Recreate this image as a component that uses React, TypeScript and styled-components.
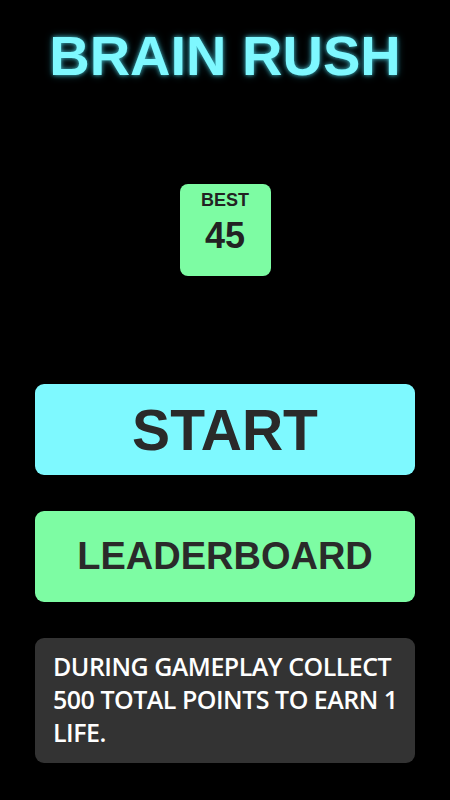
import React from "react";
import styled, { createGlobalStyle } from "styled-components";

const GlobalStyle = createGlobalStyle`
  html, body {
    margin: 0;
    padding: 0;
    background: #000;
  }
  body {
    font-family: "Liberation Sans", Arial, sans-serif;
  }
`;

const Screen = styled.div`
  width: 450px;
  height: 800px;
  background: #000;
  display: flex;
  flex-direction: column;
  align-items: center;
  box-sizing: border-box;
  padding: 0 35px;
  overflow: hidden;
`;

const Title = styled.h1`
  margin: 26px 0 0;
  font-size: 56px;
  line-height: 60px;
  font-weight: 700;
  color: #7ef8ff;
  text-shadow: 0 0 4px rgba(90, 240, 255, 0.7), 0 0 9px rgba(60, 220, 255, 0.35);
  white-space: nowrap;
`;

const BestCard = styled.div`
  margin-top: 98px;
  width: 91px;
  height: 92px;
  border-radius: 8px;
  background: #7dfca3;
  color: #222;
  display: flex;
  flex-direction: column;
  align-items: center;
  box-sizing: border-box;
  padding-top: 4px;
`;

const BestLabel = styled.div`
  font-size: 18px;
  font-weight: 700;
  line-height: 24px;
`;

const BestScore = styled.div`
  margin-top: 4px;
  font-size: 36px;
  font-weight: 700;
  line-height: 40px;
`;

const MenuButton = styled.button<{ $tone: string; $size: number; $gap: number }>`
  margin-top: ${(p) => p.$gap}px;
  width: 100%;
  height: 91px;
  border: none;
  border-radius: 9px;
  background: ${(p) => p.$tone};
  color: #2a2a2a;
  font-family: "Liberation Sans", Arial, sans-serif;
  font-weight: 700;
  font-size: ${(p) => p.$size}px;
  display: flex;
  align-items: center;
  justify-content: center;
  cursor: pointer;
`;

const InfoBox = styled.div`
  margin-top: 36px;
  width: 100%;
  box-sizing: border-box;
  padding: 12px 10px 14px 18px;
  border-radius: 9px;
  background: #333;
  color: #fff;
  font-family: "Open Sans", sans-serif;
  font-weight: 600;
  font-size: 25px;
  line-height: 33px;
  letter-spacing: -0.5px;
`;

export default function App() {
  return (
    <>
      <GlobalStyle />
      <Screen>
        <Title>BRAIN RUSH</Title>
        <BestCard>
          <BestLabel>BEST</BestLabel>
          <BestScore>45</BestScore>
        </BestCard>
        <MenuButton $tone="#7ef9ff" $size={57} $gap={108}>
          START
        </MenuButton>
        <MenuButton $tone="#7dfca3" $size={38} $gap={36}>
          LEADERBOARD
        </MenuButton>
        <InfoBox>DURING GAMEPLAY COLLECT 500 TOTAL POINTS TO EARN 1 LIFE.</InfoBox>
      </Screen>
    </>
  );
}
